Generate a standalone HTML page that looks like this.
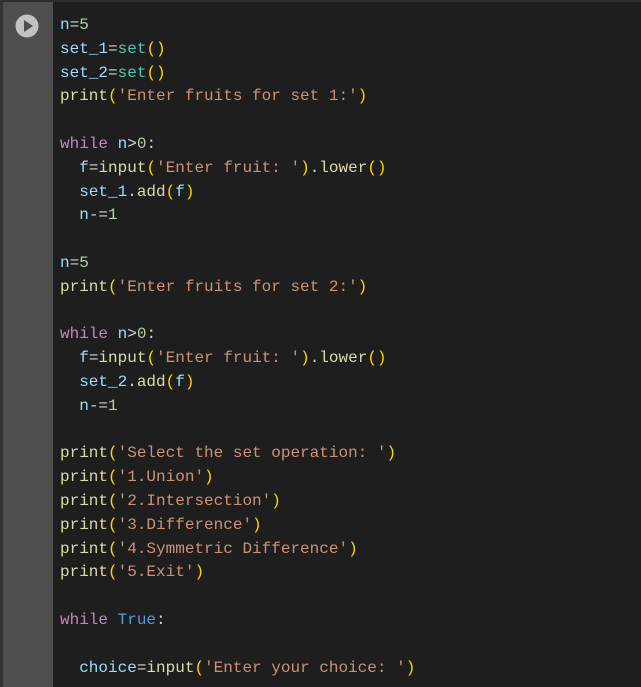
<html><head><style>
body{margin:0;width:641px;height:687px;background:#1e1e1e;overflow:hidden;position:relative}
.top{position:absolute;left:0;top:0;width:641px;height:2px;background:#2e2e2e}
.lb{position:absolute;left:0;top:0;width:3px;height:687px;background:#333}
.g{position:absolute;left:3px;top:2px;width:50px;height:685px;background:#4f4f4f}
pre{position:absolute;left:60px;top:14px;margin:0;font-family:"Liberation Mono",monospace;font-size:16px;line-height:23.8px;color:#9cdcfe}
.k{color:#c586c0}.f{color:#dcdcaa}.s{color:#ce9178}.t{color:#4ec9b0}.p{color:#ffd700}.n{color:#b5cea8}.b{color:#569cd6}.o{color:#d4d4d4}
</style></head><body>
<div class="top"></div><div class="lb"></div><div class="g"></div>
<svg style="position:absolute;left:15px;top:14px" width="24" height="24"><circle cx="12" cy="12" r="11.5" fill="#c2c2c2"/><path d="M9 6 L18 12 L9 18Z" fill="#4f4f4f"/></svg>
<pre>n<span class="o">=</span><span class="n">5</span>
set_1<span class="o">=</span><span class="t">set</span><span class="p">()</span>
set_2<span class="o">=</span><span class="t">set</span><span class="p">()</span>
<span class="f">print</span><span class="p">(</span><span class="s">'Enter fruits for set 1:'</span><span class="p">)</span>

<span class="k">while</span> n<span class="o">&gt;</span><span class="n">0</span><span class="o">:</span>
  f<span class="o">=</span><span class="f">input</span><span class="p">(</span><span class="s">'Enter fruit: '</span><span class="p">)</span><span class="o">.</span><span class="f">lower</span><span class="p">()</span>
  set_1<span class="o">.</span><span class="f">add</span><span class="p">(</span>f<span class="p">)</span>
  n<span class="o">-=</span><span class="n">1</span>

n<span class="o">=</span><span class="n">5</span>
<span class="f">print</span><span class="p">(</span><span class="s">'Enter fruits for set 2:'</span><span class="p">)</span>

<span class="k">while</span> n<span class="o">&gt;</span><span class="n">0</span><span class="o">:</span>
  f<span class="o">=</span><span class="f">input</span><span class="p">(</span><span class="s">'Enter fruit: '</span><span class="p">)</span><span class="o">.</span><span class="f">lower</span><span class="p">()</span>
  set_2<span class="o">.</span><span class="f">add</span><span class="p">(</span>f<span class="p">)</span>
  n<span class="o">-=</span><span class="n">1</span>

<span class="f">print</span><span class="p">(</span><span class="s">'Select the set operation: '</span><span class="p">)</span>
<span class="f">print</span><span class="p">(</span><span class="s">'1.Union'</span><span class="p">)</span>
<span class="f">print</span><span class="p">(</span><span class="s">'2.Intersection'</span><span class="p">)</span>
<span class="f">print</span><span class="p">(</span><span class="s">'3.Difference'</span><span class="p">)</span>
<span class="f">print</span><span class="p">(</span><span class="s">'4.Symmetric Difference'</span><span class="p">)</span>
<span class="f">print</span><span class="p">(</span><span class="s">'5.Exit'</span><span class="p">)</span>

<span class="k">while</span> <span class="b">True</span><span class="o">:</span>

  choice<span class="o">=</span><span class="f">input</span><span class="p">(</span><span class="s">'Enter your choice: '</span><span class="p">)</span></pre>
</body></html>
